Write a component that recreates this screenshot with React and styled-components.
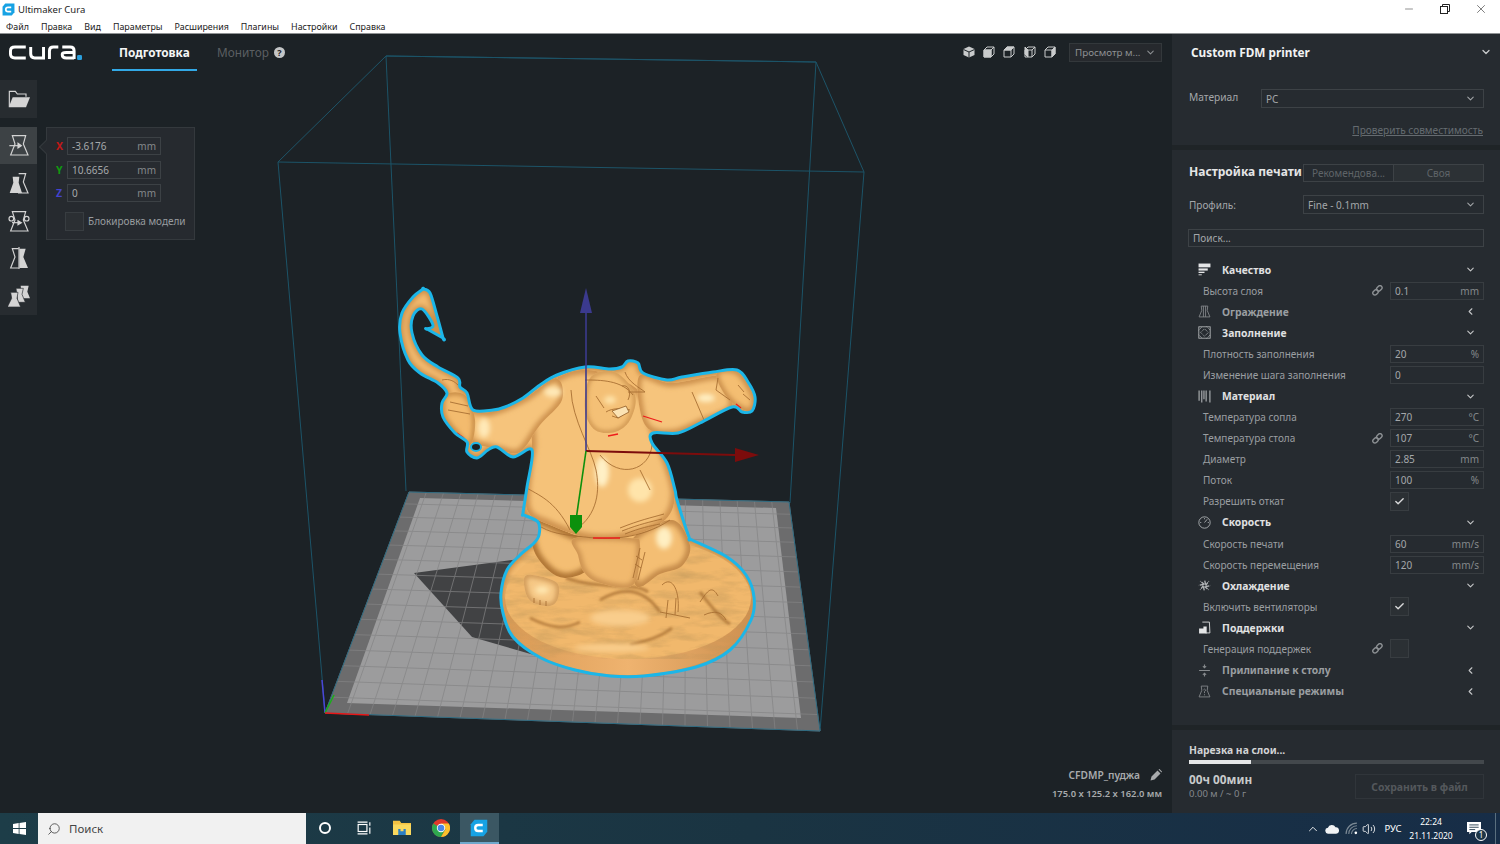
import React from 'react';
import styled, { createGlobalStyle } from 'styled-components';
import { Check, ChevronDown, ChevronLeft, ChevronUp, Minus, Search, Volume2, X } from 'lucide-react';

const GlobalStyle = createGlobalStyle`
  html, body { margin: 0; padding: 0; width: 1500px; height: 844px; overflow: hidden; background: #1c2226; }
  * { box-sizing: border-box; }
  body { font-family: "Noto Sans", "Open Sans", sans-serif; }
`;

const PLATE = { tl: [409, 492], tr: [789, 502], br: [820, 731], bl: [325, 713] };
const BED = { tl: [420, 498], tr: [776, 508], br: [801, 718], bl: [347, 703] };

const lerp = (a, b, t) => [a[0] + (b[0] - a[0]) * t, a[1] + (b[1] - a[1]) * t];
const toPoints = (q) => [q.tl, q.tr, q.br, q.bl].map((p) => p.join(',')).join(' ');

function gridLines(cols, rows) {
  const lines = [];
  for (let i = 0; i <= cols; i++) {
    const t = i / cols;
    lines.push([lerp(PLATE.tl, PLATE.tr, t), lerp(PLATE.bl, PLATE.br, t)]);
  }
  for (let j = 0; j <= rows; j++) {
    const t = Math.pow(j / rows, 1.08);
    lines.push([lerp(PLATE.tl, PLATE.bl, t), lerp(PLATE.tr, PLATE.br, t)]);
  }
  return lines;
}

// closed catmull-rom through the points, a repeated point gives a sharp corner
function smooth(pts) {
  const n = pts.length;
  let d = `M${pts[0][0]} ${pts[0][1]}`;
  for (let i = 0; i < n; i++) {
    const p0 = pts[(i - 1 + n) % n];
    const p1 = pts[i];
    const p2 = pts[(i + 1) % n];
    const p3 = pts[(i + 2) % n];
    const c1 = [p1[0] + (p2[0] - p0[0]) / 6, p1[1] + (p2[1] - p0[1]) / 6];
    const c2 = [p2[0] - (p3[0] - p1[0]) / 6, p2[1] - (p3[1] - p1[1]) / 6];
    d += ` C${c1[0].toFixed(1)} ${c1[1].toFixed(1)} ${c2[0].toFixed(1)} ${c2[1].toFixed(1)} ${p2[0]} ${p2[1]}`;
  }
  return d + ' Z';
}

const SILHOUETTE = smooth([
  [423, 289], [423, 289], [430, 293], [437, 316], [443, 338], [443, 338], [427, 329], [427, 329], [433, 325],
  [422, 309], [413, 316], [412, 333], [422, 355], [438, 367], [458, 378], [460, 387], [467, 393], [473, 410],
  [493, 410], [505, 407], [523, 398], [540, 385], [557, 375], [585, 367], [610, 369], [622, 367], [628, 361],
  [638, 363], [643, 373], [667, 380], [682, 377], [713, 372], [737, 370], [748, 382], [755, 397], [752, 411],
  [742, 412], [732, 407], [700, 423], [678, 433], [653, 433], [652, 443], [667, 463], [675, 490], [677, 500],
  [689, 537], [692, 540], [727, 557], [746, 575], [754, 597], [751, 620], [730, 650], [696, 667], [644, 676],
  [610, 676], [575, 670], [541, 658], [513, 637], [503, 613], [501, 593], [507, 570], [520, 555], [534, 543],
  [539, 535], [538, 522], [524, 515], [523, 513], [527, 487], [532, 450], [513, 457], [497, 447], [488, 450],
  [477, 458], [467, 452], [467, 442], [455, 433], [443, 417], [442, 403], [447, 393], [438, 383], [420, 373],
  [408, 360], [400, 333], [402, 313], [413, 297],
]);

const PARTS = [
  { id: 'knee', shade: '#c48a48', width: 9, pts: [[632, 540], [672, 520], [690, 545], [682, 566], [660, 574], [636, 586]] },
  { id: 'leg', shade: '#b07635', width: 10, pts: [[535, 520], [575, 535], [600, 540], [590, 560], [585, 572], [565, 578], [548, 570], [533, 548]] },
  { id: 'cloth', fill: '#f1b96e', shade: '#cb914f', width: 7, pts: [[575, 538], [630, 538], [640, 545], [633, 585], [600, 583], [584, 572], [578, 555]] },
  { id: 'foot', fill: '#f6c886', shade: '#c99150', width: 5, pts: [[527, 575], [556, 582], [558, 598], [550, 606], [532, 602], [525, 590]] },
  { id: 'torso', fill: '#f5c279', shade: '#cf9350', width: 9, pts: [[540, 390], [570, 372], [600, 372], [640, 392], [655, 433], [668, 465], [675, 495], [665, 520], [630, 536], [590, 538], [550, 525], [527, 510], [528, 470], [532, 445], [530, 410]] },
  { id: 'arm-r', fill: '#f6c47c', shade: '#cd914e', width: 8, pts: [[640, 375], [670, 383], [712, 376], [722, 378], [732, 407], [700, 423], [675, 433], [650, 430], [640, 410]] },
  { id: 'fist', fill: '#f4be72', shade: '#c88c49', width: 6, pts: [[717, 372], [738, 372], [754, 397], [750, 411], [735, 405], [722, 390]] },
  { id: 'arm-l', fill: '#f6c47c', shade: '#cd914e', width: 8, pts: [[468, 412], [490, 412], [525, 398], [556, 378], [562, 400], [540, 425], [520, 452], [500, 450], [487, 447], [470, 440]] },
  { id: 'hand', fill: '#f3bb6e', shade: '#c0843f', width: 5, pts: [[445, 395], [465, 395], [475, 420], [470, 445], [455, 432], [443, 415]] },
  { id: 'head', fill: '#f4c076', shade: '#c48a46', width: 4, pts: [[590, 378], [615, 372], [635, 395], [630, 420], [615, 432], [595, 430], [585, 410]] },
];

const HIGHLIGHTS = [
  [484, 428, 6, 10, '#ffe9b8'],
  [553, 392, 9, 5, '#ffe9b8'],
  [706, 398, 9, 4, '#fff0c4'],
  [602, 472, 7, 15, '#fff0c6'],
  [640, 490, 12, 12, '#ffe4aa'],
  [610, 400, 6, 4, '#ffe4aa'],
  [664, 538, 8, 11, '#ffefc2'],
  [542, 590, 7, 4, '#ffe7b0'],
  [612, 648, 38, 4, '#f9cd8c'],
  [620, 618, 30, 8, '#f9cd8c'],
];

const TERRAIN_STREAKS = [
  'M600 600 C625 585 645 590 660 612',
  'M530 618 C550 628 565 630 580 622',
  'M630 645 C650 640 662 636 672 628',
  'M700 592 C712 608 722 620 730 624',
  'M566 578 C600 590 635 582 648 592',
];

const DETAIL_LINES = [
  'M571 390 C572 420 592 450 596 470 C600 490 598 515 575 530',
  'M585 380 C600 380 622 380 633 395',
  'M525 487 C538 495 555 500 570 530',
  'M625 372 C628 382 640 388 645 392 L628 392',
  'M692 392 L704 420',
  'M718 378 L716 390 L730 400 M738 385 L744 392 M743 394 L750 400',
  'M640 470 L650 490 M600 455 C620 480 650 470 652 445',
  'M541 527 C555 535 570 535 585 537 C605 540 640 540 670 520',
  'M534 598 L534 603 M540 600 L540 605 M546 601 L546 606',
  'M640 548 L633 578 M645 552 L638 580 M636 556 L642 560 M635 564 L641 568',
  'M662 585 C672 575 680 590 678 612 M668 600 L666 618 M676 598 L675 615 M660 612 L690 618',
  'M700 602 C708 590 712 585 718 596 M704 615 C715 610 722 612 726 620',
  'M620 528 C640 520 650 518 664 514 M622 531 C640 524 650 522 662 519 M625 534 C640 528 650 526 660 524',
  'M450 402 L468 406 M448 410 L470 414',
  'M442 380 C450 378 455 382 458 385',
  'M606 412 C612 408 622 408 630 410 M612 416 L618 418 L624 414',
  'M596 396 L604 408 M622 386 C628 384 632 392 628 400',
];

const RED_MARKS = [
  'M643 416 L662 422',
  'M608 436 L618 434',
  'M457 433 L464 438',
  'M593 538 L620 538',
  'M736 404 L741 408',
];

function Part({ id, pts, fill = '#f4be73', shade, width }) {
  const d = smooth(pts);
  return (
    <g>
      <clipPath id={id}>
        <path d={d} />
      </clipPath>
      <path d={d} fill={fill} />
      <g clipPath={`url(#${id})`}>
        <path d={d} fill="none" stroke={shade} strokeWidth={width} filter="url(#soft)" />
      </g>
    </g>
  );
}

function Scene() {
  return (
    <SceneSvg viewBox="0 34 1172 779">
      <defs>
        <clipPath id="body-clip">
          <path d={SILHOUETTE} />
        </clipPath>
        <filter id="soft" x="-50%" y="-50%" width="200%" height="200%">
          <feGaussianBlur stdDeviation="2.4" />
        </filter>
        <filter id="softer" x="-50%" y="-50%" width="200%" height="200%">
          <feGaussianBlur stdDeviation="1.2" />
        </filter>
        <filter id="terrain" x="0" y="0" width="100%" height="100%">
          <feTurbulence type="fractalNoise" baseFrequency="0.03 0.11" numOctaves="4" seed="7" />
          <feColorMatrix values="0 0 0 0 0.5  0 0 0 0 0.3  0 0 0 0 0.1  1.9 0 0 0 -0.8" />
        </filter>
        <linearGradient id="rim-fill" x1="0" y1="0" x2="1" y2="0">
          <stop offset="0" stopColor="#d99a55" />
          <stop offset="0.5" stopColor="#efb36f" />
          <stop offset="1" stopColor="#cd9050" />
        </linearGradient>
      </defs>

      <g fill="none" stroke="#1c5468" strokeWidth="1">
        <polyline points="406,491 386,56 816,62 790,503" />
        <polygon points="278,162 864,172 816,62 386,56" />
        <polyline points="278,162 325,712" />
        <polyline points="864,172 820,731" />
      </g>

      <polygon points={toPoints(PLATE)} fill="#6c6c6d" />
      <polygon points={toPoints(BED)} fill="#9c9c9d" />
      <polygon points="414,573 520,559 560,600 600,668 541,657 472,637" fill="#414244" />
      <g stroke="#848485" strokeWidth="1" opacity="0.7">
        {gridLines(22, 15).map(([a, b], i) => (
          <line key={i} x1={a[0]} y1={a[1]} x2={b[0]} y2={b[1]} />
        ))}
      </g>
      <polygon points={toPoints(PLATE)} fill="none" stroke="#2d6a80" strokeWidth="1" />

      <path d={SILHOUETTE} fill="#f3bb70" />
      <g clipPath="url(#body-clip)">
        <path d={SILHOUETTE} fill="none" stroke="#c98e4a" strokeWidth="7" filter="url(#soft)" />
        <ellipse cx="628" cy="608" rx="125" ry="67" fill="url(#rim-fill)" />
        <ellipse cx="628" cy="598" rx="123" ry="61" fill="#f1b86c" />
        <ellipse cx="628" cy="598" rx="123" ry="61" filter="url(#terrain)" opacity="0.6" />
        <g fill="none" stroke="#a56d30" strokeWidth="3" filter="url(#softer)" opacity="0.7">
          {TERRAIN_STREAKS.map((d) => (
            <path key={d} d={d} />
          ))}
        </g>
        {PARTS.map((part) => (
          <Part key={part.id} {...part} />
        ))}
        <g filter="url(#soft)">
          {HIGHLIGHTS.map(([cx, cy, rx, ry, fill], i) => (
            <ellipse key={i} cx={cx} cy={cy} rx={rx} ry={ry} fill={fill} />
          ))}
        </g>
        <g fill="none" stroke="#a86f33" strokeWidth="0.9">
          {DETAIL_LINES.map((d) => (
            <path key={d} d={d} />
          ))}
        </g>
        <path d="M612 411 L626 406 L629 412 L618 418 Z" fill="#fbe3b4" stroke="#8f5a26" strokeWidth="0.8" />
        <g fill="none" stroke="#ee1c1c" strokeWidth="1.3">
          {RED_MARKS.map((d) => (
            <path key={d} d={d} />
          ))}
        </g>
      </g>
      <path d={SILHOUETTE} fill="none" stroke="#1cb6e8" strokeWidth="3" strokeLinejoin="round" />
      <ellipse cx="476" cy="447" rx="5" ry="4" fill="#1c2226" stroke="#1cb6e8" strokeWidth="2" />

      <g strokeWidth="1.6" fill="none">
        <path d="M586 451 V310" stroke="#3b3a8e" />
        <path d="M586 451 L735 455" stroke="#7c0c0c" strokeWidth="2" />
        <path d="M586 451 L576 520" stroke="#0c900c" />
      </g>
      <polygon points="586,288 592,313 580,313" fill="#3b3a8e" />
      <polygon points="735,448 759,455 735,462" fill="#7c0c0c" />
      <polygon points="570,515 582,515 582,527 576,534 570,527" fill="#0c900c" />
      <g fill="none" strokeWidth="1.5">
        <path d="M325 713 L322 680" stroke="#4a46d8" />
        <path d="M325 713 L334 695" stroke="#18b018" />
        <path d="M325 713 L369 715" stroke="#ea1616" />
      </g>
    </SceneSvg>
  );
}

function CuraLogo() {
  return (
    <LogoSvg viewBox="0 0 74 16">
      <g fill="none" stroke="#fff" strokeWidth="3">
        <path d="M17 2 H6 Q1.5 2 1.5 6 V9 Q1.5 13 6 13 H17" />
        <path d="M22 2 V9 Q22 13 26 13 H35 V2" />
        <path d="M41 14 V6 Q41 2 45 2 H50" />
        <path d="M54 2 H62 Q66 2 66 6 V14 M66 13 H58 Q54 13 54 10 V9 Q54 7.5 58 7.5 H66" />
      </g>
      <rect x="69" y="10" width="5" height="5" rx="1.2" fill="#2a9fdc" />
    </LogoSvg>
  );
}

function CuraMark({ size }) {
  return (
    <svg width={size} height={size} viewBox="0 0 24 24">
      <path d="M6 1 H23 V17 L18 23 H1 V7 Z" fill="#17a2e4" />
      <path d="M17 8 H11 Q7 8 7 12 Q7 16 11 16 H17" fill="none" stroke="#fff" strokeWidth="3.2" />
    </svg>
  );
}

const TRAPEZE = 'M13 5 H53 L46 30 L60 63 H8 L21 30 Z';

function ToolGlyph({ kind }) {
  return (
    <svg width="22" height="22" viewBox="0 0 66 66" fill="none" stroke="#d4d4d4" strokeWidth="3.5">
      {kind === 'move' && (
        <>
          <path d={TRAPEZE} />
          <path d="M4 35 H36" />
          <path d="M30 28 L40 35 L30 42 Z" fill="#d4d4d4" />
        </>
      )}
      {kind === 'scale' && (
        <>
          <path d="M32 5 H53 L46 30 L60 63 H30" />
          <path d="M14 14 H34 L32 32 L42 63 H5 L16 32 Z" fill="#d4d4d4" stroke="none" />
        </>
      )}
      {kind === 'rotate' && (
        <>
          <path d={TRAPEZE} />
          <circle cx="10" cy="26" r="7" />
          <circle cx="56" cy="26" r="7" />
          <path d="M12 38 H36" />
          <path d="M30 32 L40 38 L30 44 Z" fill="#d4d4d4" />
        </>
      )}
      {kind === 'mirror' && (
        <>
          <path d="M32 5 H13 L21 30 L8 63 H32" />
          <path d="M34 5 H53 L46 30 L60 63 H34 Z" fill="#d4d4d4" stroke="none" />
          <path d="M33 0 V66" />
        </>
      )}
      {kind === 'per-model' && (
        <>
          <path d="M38 2 H62 L58 20 L66 40 H44 L40 20 Z" fill="#d4d4d4" stroke="none" />
          <path d="M24 10 H46 L42 28 L52 52 H30 Z" fill="#d4d4d4" stroke="#272c30" strokeWidth="2" />
          <path d="M8 22 H30 L27 40 L38 66 H-2 L11 40 Z" fill="#d4d4d4" stroke="#272c30" strokeWidth="2" />
        </>
      )}
      {kind === 'folder' && (
        <>
          <path d="M4 56 V10 H22 L28 18 H54 V26" />
          <path d="M14 28 H66 L54 58 H2 Z" fill="#d4d4d4" stroke="none" />
        </>
      )}
    </svg>
  );
}

function CubeGlyph({ face }) {
  return (
    <svg width="12" height="12" viewBox="0 0 24 24" fill="none" stroke="#c9cbcc" strokeWidth="2">
      {face === 'iso' ? (
        <>
          <path d="M12 1 L23 6 V18 L12 23 L1 18 V6 Z" fill="#c9cbcc" stroke="none" />
          <path d="M1 7 L12 12 L23 7 M12 12 V23" stroke="#1c2226" />
        </>
      ) : (
        <>
          <path d="M8 2 H22 V16 L16 22 H2 V8 Z" />
          <path d="M2 8 H16 V22 M16 8 L22 2" />
          {face === 'front' && <path d="M2 8 H16 V22 H2 Z" fill="#c9cbcc" />}
          {face === 'top' && <path d="M8 2 H22 L16 8 H2 Z" fill="#c9cbcc" />}
          {face === 'left' && <path d="M2 2 L8 8 V22 L2 16 Z" fill="#c9cbcc" />}
          {face === 'right' && <path d="M16 8 L22 2 V16 L16 22 Z" fill="#c9cbcc" />}
        </>
      )}
    </svg>
  );
}

function SectionGlyph({ kind, color }) {
  return (
    <svg width="13" height="13" viewBox="0 0 24 24" fill="none" stroke={color} strokeWidth="1.6">
      {kind === 'quality' && (
        <g fill={color} stroke="none">
          <rect x="1" y="1" width="22" height="7" />
          <rect x="1" y="10" width="17" height="4" />
          <rect x="1" y="16" width="11" height="2.5" />
          <rect x="1" y="21" width="6" height="1.6" />
        </g>
      )}
      {kind === 'shell' && <path d="M6 2 H18 L17 10 L22 22 H2 L7 10 Z M10 2 L10 22 M14 2 L14 22" />}
      {kind === 'infill' && (
        <>
          <rect x="1.5" y="1.5" width="21" height="21" />
          <path d="M1 8 L8 1 M16 1 L23 8 M1 16 L8 23 M16 23 L23 16 M5 12 L12 5 L19 12 L12 19 Z" strokeDasharray="2 1.5" />
        </>
      )}
      {kind === 'material' && (
        <g strokeWidth="2">
          <path d="M2 1 V20 M7 1 V23 M11 1 V17 M15 1 V21 M22 1 V23" />
        </g>
      )}
      {kind === 'speed' && (
        <>
          <circle cx="12" cy="12" r="10.5" />
          <path d="M12 12 L17 6 M4 12 H6 M18 12 H20 M12 4 V6" />
        </>
      )}
      {kind === 'cooling' && (
        <g strokeWidth="2.4" strokeDasharray="7 2">
          <path d="M14 10 L12 1 M14 12 L20 4 M14 14 L23 12 M12 14 L20 20 M10 14 L12 23 M10 12 L4 20 M10 10 L1 12 M12 10 L4 4" />
        </g>
      )}
      {kind === 'support' && (
        <>
          <path d="M8 2 H21 L22 22 H14" />
          <path d="M10 10 V14 H2 V23 H16 V10 Z" fill={color} stroke="none" />
        </>
      )}
      {kind === 'adhesion' && (
        <g strokeWidth="2">
          <path d="M2 12 H22 M12 1 V6 M12 18 V23 M9 4 L12 7 L15 4 M9 20 L12 17 L15 20" />
        </g>
      )}
      {kind === 'special' && (
        <>
          <path d="M6 2 H18 L17 10 L22 22 H2 L7 10 Z" />
          <path d="M10 9 Q12 6 14 9 Q14 11 12 12 V15 M12 17 V19" />
        </>
      )}
    </svg>
  );
}

function LinkGlyph() {
  return (
    <svg width="11" height="11" viewBox="0 0 24 24" fill="none" stroke="#8d9194" strokeWidth="3">
      <rect x="1" y="12" width="13" height="9" rx="4.5" transform="rotate(-45 7 16)" />
      <rect x="10" y="3" width="13" height="9" rx="4.5" transform="rotate(-45 16 8)" />
    </svg>
  );
}

function PencilGlyph() {
  return (
    <svg width="12" height="12" viewBox="0 0 24 24" fill="#a8abad">
      <path d="M1 23 L3 15 L15 3 L21 9 L9 21 Z M17 1 L19 0 L24 5 L23 7 Z" />
    </svg>
  );
}

function WindowsLogo() {
  return (
    <svg width="13" height="13" viewBox="0 0 24 24" fill="#fff">
      <path d="M0 3.5 L10.5 2 V11.3 H0 Z M12 1.8 L24 0 V11.3 H12 Z M0 12.8 H10.5 V22 L0 20.5 Z M12 12.8 H24 V24 L12 22.2 Z" />
    </svg>
  );
}

function ExplorerIcon() {
  return (
    <svg width="18" height="15" viewBox="0 0 24 20">
      <path d="M0 1 H9 L11 4 H24 V20 H0 Z" fill="#f5c242" />
      <rect x="0" y="6" width="24" height="14" fill="#fbd95e" />
      <rect x="7" y="12" width="10" height="8" fill="#2c7fc4" />
      <rect x="10" y="12" width="4" height="3" fill="#fbd95e" />
    </svg>
  );
}

function ChromeIcon() {
  return (
    <svg width="18" height="18" viewBox="0 0 24 24">
      <circle cx="12" cy="12" r="12" fill="#e0392c" />
      <path d="M12 12 L1.6 6 A12 12 0 0 0 12 24 L18 13.5 Z" fill="#2fa84f" />
      <path d="M12 6 H22.4 A12 12 0 0 1 12 24 L18 13.5 Z" fill="#fbc02d" />
      <circle cx="12" cy="12" r="5.6" fill="#fff" />
      <circle cx="12" cy="12" r="4.4" fill="#4a86e8" />
    </svg>
  );
}

function TaskViewIcon() {
  return (
    <svg width="14" height="14" viewBox="0 0 24 24" fill="none" stroke="#fff" strokeWidth="2">
      <rect x="2" y="6" width="15" height="12" />
      <path d="M1 2 H18 M1 22 H18 M22 2 V8 M22 11 V22" />
    </svg>
  );
}

function CloudIcon() {
  return (
    <svg width="14" height="10" viewBox="0 0 24 16" fill="#f1f3f5">
      <path d="M6 16 A5 5 0 0 1 5 6 A7 7 0 0 1 18 5 A5.5 5.5 0 0 1 19 16 Z" />
    </svg>
  );
}

function WifiIcon() {
  return (
    <svg width="13" height="13" viewBox="0 0 24 24" fill="none" stroke="#7c8a95" strokeWidth="2">
      <path d="M2 22 A20 20 0 0 1 22 2 M7 22 A15 15 0 0 1 22 7 M12 22 A10 10 0 0 1 22 12" />
      <circle cx="20" cy="20" r="2.4" fill="#fff" stroke="none" />
    </svg>
  );
}

function NotifyIcon() {
  return (
    <svg width="14" height="14" viewBox="0 0 24 24" fill="#fff">
      <path d="M0 0 H24 V17 H8 L4 21 V17 H0 Z" />
      <path d="M4 5 H20 M4 9 H20 M4 13 H14" stroke="#1c3547" strokeWidth="1.5" />
    </svg>
  );
}

const MENU = ['Файл', 'Правка', 'Вид', 'Параметры', 'Расширения', 'Плагины', 'Настройки', 'Справка'];
const TOOLS = ['move', 'scale', 'rotate', 'mirror', 'per-model'];
const CUBES = ['iso', 'front', 'top', 'left', 'right'];
const COORDS = [
  { axis: 'X', color: '#c01818', value: '-3.6176' },
  { axis: 'Y', color: '#109a10', value: '10.6656' },
  { axis: 'Z', color: '#4343cf', value: '0' },
];

const SETTINGS = [
  { head: 'Качество', icon: 'quality', open: true, bright: true },
  { label: 'Высота слоя', value: '0.1', unit: 'mm', link: true },
  { head: 'Ограждение', icon: 'shell', dim: true },
  { head: 'Заполнение', icon: 'infill', open: true },
  { label: 'Плотность заполнения', value: '20', unit: '%' },
  { label: 'Изменение шага заполнения', value: '0' },
  { head: 'Материал', icon: 'material', open: true },
  { label: 'Температура сопла', value: '270', unit: '°C' },
  { label: 'Температура стола', value: '107', unit: '°C', link: true },
  { label: 'Диаметр', value: '2.85', unit: 'mm' },
  { label: 'Поток', value: '100', unit: '%' },
  { label: 'Разрешить откат', checked: true },
  { head: 'Скорость', icon: 'speed', open: true },
  { label: 'Скорость печати', value: '60', unit: 'mm/s' },
  { label: 'Скорость перемещения', value: '120', unit: 'mm/s' },
  { head: 'Охлаждение', icon: 'cooling', open: true },
  { label: 'Включить вентиляторы', checked: true },
  { head: 'Поддержки', icon: 'support', open: true, bright: true },
  { label: 'Генерация поддержек', unchecked: true, link: true },
  { head: 'Прилипание к столу', icon: 'adhesion', dim: true },
  { head: 'Специальные режимы', icon: 'special', dim: true },
];

function SettingRow({ row }) {
  if (row.head) {
    const color = row.bright ? '#e4e5e6' : row.dim ? '#85898c' : '#b4b7b9';
    return (
      <HeadRow>
        <HeadIcon>
          <SectionGlyph kind={row.icon} color={color} />
        </HeadIcon>
        <HeadText $dim={row.dim}>{row.head}</HeadText>
        <HeadChevron>
          {row.open ? <ChevronDown size={11} strokeWidth={2.4} /> : <ChevronLeft size={11} strokeWidth={2.4} />}
        </HeadChevron>
      </HeadRow>
    );
  }
  return (
    <FieldRow>
      <FieldLabel>{row.label}</FieldLabel>
      <LinkSlot>{row.link && <LinkGlyph />}</LinkSlot>
      {row.value !== undefined && (
        <FieldInput>
          <span>{row.value}</span>
          <Unit>{row.unit}</Unit>
        </FieldInput>
      )}
      {(row.checked || row.unchecked) && (
        <CheckBox>{row.checked && <Check size={11} strokeWidth={3} color="#d8d9da" />}</CheckBox>
      )}
    </FieldRow>
  );
}

export default function App() {
  return (
    <Page>
      <GlobalStyle />
      <TitleBar>
        <TitleLeft>
          <CuraMark size={13} />
          <TitleText>Ultimaker Cura</TitleText>
        </TitleLeft>
        <WindowButtons>
          <WindowButton>
            <Minus size={12} strokeWidth={1} />
          </WindowButton>
          <WindowButton>
            <svg width="10" height="10" viewBox="0 0 10 10" fill="none" stroke="#222" strokeWidth="1">
              <rect x="0.5" y="2.5" width="7" height="7" />
              <path d="M2.5 2.5 V0.5 H9.5 V7.5 H7.5" />
            </svg>
          </WindowButton>
          <WindowButton>
            <X size={14} strokeWidth={1} />
          </WindowButton>
        </WindowButtons>
      </TitleBar>
      <MenuBar>
        {MENU.map((item) => (
          <MenuItem key={item}>{item}</MenuItem>
        ))}
      </MenuBar>

      <Main>
        <Viewport>
          <Scene />
          <Header>
            <HeaderLeft>
              <CuraLogo />
              <StageTab $active>Подготовка</StageTab>
              <StageTab>
                Монитор
                <HelpDot>?</HelpDot>
              </StageTab>
            </HeaderLeft>
            <HeaderRight>
              <CubeRow>
                {CUBES.map((face) => (
                  <CubeGlyph key={face} face={face} />
                ))}
              </CubeRow>
              <ViewSelect>
                <span>Просмотр м...</span>
                <ChevronDown size={11} strokeWidth={2.2} />
              </ViewSelect>
            </HeaderRight>
          </Header>

          <ToolArea>
            <ToolColumn>
              <ToolBlock>
                <ToolButton>
                  <ToolGlyph kind="folder" />
                </ToolButton>
              </ToolBlock>
              <ToolBlock>
                {TOOLS.map((tool, i) => (
                  <ToolButton key={tool} $active={i === 0}>
                    <ToolGlyph kind={tool} />
                  </ToolButton>
                ))}
              </ToolBlock>
            </ToolColumn>
            <MovePanel>
              <PanelArrow />
              {COORDS.map((c) => (
                <CoordRow key={c.axis}>
                  <AxisLabel $color={c.color}>{c.axis}</AxisLabel>
                  <CoordInput>
                    <span>{c.value}</span>
                    <Unit>mm</Unit>
                  </CoordInput>
                </CoordRow>
              ))}
              <LockRow>
                <LockBox />
                <span>Блокировка модели</span>
              </LockRow>
            </MovePanel>
          </ToolArea>

          <ModelInfo>
            <ModelName>
              <span>CFDMP_пуджа</span>
              <PencilGlyph />
            </ModelName>
            <ModelSize>175.0 x 125.2 x 162.0 мм</ModelSize>
          </ModelInfo>
        </Viewport>

        <Sidebar>
          <PrinterCard>
            <PrinterHead>
              <span>Custom FDM printer</span>
              <ChevronDown size={12} strokeWidth={2.6} color="#c8cacb" />
            </PrinterHead>
            <MaterialRow>
              <MaterialLabel>Материал</MaterialLabel>
              <Select $width={223}>
                <span>PC</span>
                <ChevronDown size={11} strokeWidth={2.2} />
              </Select>
            </MaterialRow>
            <CheckLink>Проверить совместимость</CheckLink>
          </PrinterCard>

          <SetupCard>
            <SetupHead>
              <SetupTitle>Настройка печати</SetupTitle>
              <ModeTabs>
                <ModeTab>Рекомендова...</ModeTab>
                <ModeTab $active>Своя</ModeTab>
              </ModeTabs>
            </SetupHead>
            <ProfileRow>
              <ProfileLabel>Профиль:</ProfileLabel>
              <Select $width={181}>
                <span>Fine - 0.1mm</span>
                <ChevronDown size={11} strokeWidth={2.2} />
              </Select>
            </ProfileRow>
            <SearchBox>Поиск...</SearchBox>
            <SettingsList>
              {SETTINGS.map((row) => (
                <SettingRow key={row.head || row.label} row={row} />
              ))}
            </SettingsList>
          </SetupCard>

          <SliceCard>
            <SliceTitle>Нарезка на слои...</SliceTitle>
            <Progress>
              <ProgressFill $percent={21} />
            </Progress>
            <SliceBottom>
              <div>
                <TimeText>00ч 00мин</TimeText>
                <CostText>0.00 м / ~ 0 г</CostText>
              </div>
              <SaveButton>Сохранить в файл</SaveButton>
            </SliceBottom>
          </SliceCard>
        </Sidebar>
      </Main>

      <Taskbar>
        <StartButton>
          <WindowsLogo />
        </StartButton>
        <TaskSearch>
          <MirrorIcon>
            <Search size={14} strokeWidth={1.3} color="#333" />
          </MirrorIcon>
          <span>Поиск</span>
        </TaskSearch>
        <TaskButton>
          <CortanaRing />
        </TaskButton>
        <TaskButton>
          <TaskViewIcon />
        </TaskButton>
        <TaskButton>
          <ExplorerIcon />
        </TaskButton>
        <TaskButton>
          <ChromeIcon />
        </TaskButton>
        <TaskButton $active>
          <CuraMark size={18} />
        </TaskButton>
        <Tray>
          <TraySlot $width={20}>
            <ChevronUp size={14} strokeWidth={1.5} color="#fff" />
          </TraySlot>
          <TraySlot $width={18}>
            <CloudIcon />
          </TraySlot>
          <TraySlot $width={20}>
            <WifiIcon />
          </TraySlot>
          <TraySlot $width={16}>
            <Volume2 size={14} strokeWidth={1.4} color="#fff" />
          </TraySlot>
          <TraySlot $width={32}>РУС</TraySlot>
          <TraySlot $width={44}>
            <Clock>
              <span>22:24</span>
              <span>21.11.2020</span>
            </Clock>
          </TraySlot>
          <TraySlot $width={42}>
            <NotifyWrap>
              <NotifyIcon />
              <NotifyBadge>1</NotifyBadge>
            </NotifyWrap>
          </TraySlot>
          <ShowDesktop />
        </Tray>
      </Taskbar>
    </Page>
  );
}

const Page = styled.div`
  width: 1500px;
  height: 844px;
  display: flex;
  flex-direction: column;
  overflow: hidden;
`;

const TitleBar = styled.div`
  height: 18px;
  background: #fff;
  display: flex;
  justify-content: space-between;
  align-items: center;
`;

const TitleLeft = styled.div`
  display: flex;
  align-items: center;
  gap: 3px;
  padding-left: 2px;
`;

const TitleText = styled.span`
  font-size: 9.5px;
  color: #222;
`;

const WindowButtons = styled.div`
  display: flex;
  padding-right: 1px;
`;

const WindowButton = styled.div`
  width: 36px;
  height: 18px;
  display: flex;
  align-items: center;
  justify-content: center;
  color: #222;
`;

const MenuBar = styled.div`
  height: 16px;
  background: #fff;
  border-bottom: 1px solid #8f9294;
  display: flex;
  align-items: center;
  gap: 12px;
  padding-left: 6px;
`;

const MenuItem = styled.span`
  font-size: 8.9px;
  color: #222;
  padding-top: 1px;
`;

const Main = styled.div`
  flex: 1;
  display: flex;
  min-height: 0;
`;

const Viewport = styled.div`
  position: relative;
  flex: 1;
  display: flex;
  flex-direction: column;
  background: #1c2226;
`;

const SceneSvg = styled.svg`
  position: absolute;
  inset: 0;
  width: 100%;
  height: 100%;
`;

const Header = styled.div`
  position: relative;
  height: 37px;
  display: flex;
  justify-content: space-between;
  padding: 0 10px 0 9px;
`;

const HeaderLeft = styled.div`
  display: flex;
  align-items: stretch;
`;

const LogoSvg = styled.svg`
  width: 73px;
  height: 16px;
  margin: 11px 30px 0 0;
`;

const StageTab = styled.div`
  height: 37px;
  width: 85px;
  padding: 1px 0 0 ${(p) => (p.$active ? 7 : 8)}px;
  margin-right: 12px;
  display: flex;
  align-items: center;
  gap: 5px;
  white-space: nowrap;
  font-size: 11.8px;
  font-weight: ${(p) => (p.$active ? 700 : 400)};
  color: ${(p) => (p.$active ? '#f4f5f5' : '#5b5f62')};
  border-bottom: 2px solid ${(p) => (p.$active ? '#32a9e6' : 'transparent')};
`;

const HelpDot = styled.span`
  width: 11px;
  height: 11px;
  border-radius: 50%;
  background: #c4c6c7;
  color: #1c2226;
  font-size: 9px;
  font-weight: 700;
  display: flex;
  align-items: center;
  justify-content: center;
`;

const HeaderRight = styled.div`
  display: flex;
  align-items: center;
  gap: 13px;
  padding-bottom: 1px;
`;

const CubeRow = styled.div`
  display: flex;
  gap: 8.3px;
  align-items: center;
`;

const ViewSelect = styled.div`
  width: 93px;
  height: 19px;
  background: #26292d;
  border: 1px solid #33383b;
  color: #8e9194;
  display: flex;
  justify-content: space-between;
  align-items: center;
  padding: 0 5px;
  font-size: 9.8px;
  white-space: nowrap;
`;

const ToolArea = styled.div`
  position: relative;
  display: flex;
  align-items: flex-start;
  margin-top: 9px;
`;

const ToolColumn = styled.div`
  display: flex;
  flex-direction: column;
  gap: 9px;
  width: 37px;
`;

const ToolBlock = styled.div`
  background: #272c30;
`;

const ToolButton = styled.div`
  height: 37.6px;
  display: flex;
  align-items: center;
  justify-content: center;
  background: ${(p) => (p.$active ? '#3d4245' : 'transparent')};
`;

const MovePanel = styled.div`
  position: relative;
  width: 149px;
  height: 113px;
  margin: 47px 0 0 9px;
  padding: 9px 0 0 7px;
  background: #262a2f;
  border: 1px solid #34393d;
  display: flex;
  flex-direction: column;
  gap: 5.5px;
`;

const PanelArrow = styled.div`
  position: absolute;
  left: -6px;
  top: 14px;
  width: 10px;
  height: 10px;
  background: #262a2f;
  border-left: 1px solid #34393d;
  border-bottom: 1px solid #34393d;
  transform: rotate(45deg);
`;

const CoordRow = styled.div`
  display: flex;
  align-items: center;
  gap: 4px;
`;

const AxisLabel = styled.span`
  width: 9px;
  padding-left: 2px;
  font-size: 10.5px;
  font-weight: 700;
  color: ${(p) => p.$color};
`;

const CoordInput = styled.div`
  width: 94px;
  height: 18px;
  border: 1px solid #3c4145;
  background: #272b30;
  display: flex;
  justify-content: space-between;
  align-items: center;
  padding: 0 4px;
  font-size: 10px;
  color: #a6a9ab;
`;

const Unit = styled.span`
  color: #84888b;
`;

const LockRow = styled.div`
  display: flex;
  align-items: center;
  gap: 4px;
  margin: 4px 0 0 11px;
  font-size: 10px;
  color: #989c9f;
  white-space: nowrap;
`;

const LockBox = styled.div`
  width: 19px;
  height: 19px;
  background: #2b2f33;
  border: 1px solid #383d41;
`;

const ModelInfo = styled.div`
  position: relative;
  margin-top: auto;
  padding: 0 10px 13px 0;
  display: flex;
  flex-direction: column;
  align-items: flex-end;
  gap: 5px;
  font-weight: 600;
  color: #a8abad;
`;

const ModelName = styled.div`
  display: flex;
  align-items: center;
  gap: 10px;
  font-size: 10.2px;
`;

const ModelSize = styled.div`
  font-size: 9.4px;
`;

const Sidebar = styled.div`
  width: 328px;
  display: flex;
  flex-direction: column;
  gap: 5px;
  background: #1f2427;
`;

const PrinterCard = styled.div`
  height: 111px;
  background: #262b30;
  padding: 0 16px 0 17px;
`;

const PrinterHead = styled.div`
  height: 36px;
  display: flex;
  justify-content: space-between;
  align-items: center;
  padding-left: 2px;
  margin-right: -8px;
  font-size: 11.8px;
  font-weight: 700;
  color: #f2f3f3;
`;

const MaterialRow = styled.div`
  display: flex;
  justify-content: space-between;
  align-items: center;
  margin-top: 19px;
`;

const MaterialLabel = styled.span`
  font-size: 10.2px;
  color: #a4a7aa;
  margin-top: -3px;
`;

const Select = styled.div`
  width: ${(p) => p.$width}px;
  height: 19px;
  border: 1px solid #3d4246;
  display: flex;
  justify-content: space-between;
  align-items: center;
  padding: 0 7px 0 4px;
  font-size: 10px;
  color: #a4a7aa;
`;

const CheckLink = styled.div`
  margin-top: 15px;
  margin-right: 1px;
  text-align: right;
  font-size: 10.1px;
  color: #656b70;
  text-decoration: underline;
`;

const SetupCard = styled.div`
  flex: 1;
  background: #262b30;
  padding: 13px 16px 0 16px;
`;

const SetupHead = styled.div`
  display: flex;
  justify-content: space-between;
  align-items: center;
`;

const SetupTitle = styled.span`
  font-size: 12px;
  font-weight: 700;
  color: #e4e5e6;
  padding-left: 1px;
  margin-bottom: 3px;
  white-space: nowrap;
`;

const ModeTabs = styled.div`
  display: flex;
  width: 181px;
  height: 18px;
  border: 1px solid #3d4246;
`;

const ModeTab = styled.div`
  flex: 1;
  display: flex;
  align-items: center;
  justify-content: center;
  font-size: 10px;
  color: #5f6468;
  white-space: nowrap;
  background: ${(p) => (p.$active ? '#2c3135' : 'transparent')};
  & + & {
    border-left: 1px solid #3d4246;
  }
`;

const ProfileRow = styled.div`
  display: flex;
  justify-content: space-between;
  align-items: center;
  margin-top: 12px;
`;

const ProfileLabel = styled.span`
  font-size: 10px;
  color: #a4a7aa;
  padding-left: 1px;
`;

const SearchBox = styled.div`
  height: 18px;
  margin-top: 15px;
  border: 1px solid #3d4246;
  display: flex;
  align-items: center;
  padding-left: 4px;
  font-size: 10px;
  color: #a4a7aa;
`;

const SettingsList = styled.div`
  margin-top: 12px;
  display: grid;
  grid-auto-rows: 21.08px;
`;

const HeadRow = styled.div`
  display: flex;
  align-items: center;
`;

const HeadIcon = styled.div`
  width: 34px;
  padding-left: 10px;
  display: flex;
  align-items: center;
`;

const HeadText = styled.span`
  flex: 1;
  font-size: 10.35px;
  font-weight: 700;
  color: ${(p) => (p.$dim ? '#9a9ea1' : '#e0e1e2')};
`;

const HeadChevron = styled.div`
  width: 19px;
  display: flex;
  color: #c4c6c7;
`;

const FieldRow = styled.div`
  display: flex;
  align-items: center;
  padding-left: 15px;
`;

const FieldLabel = styled.span`
  flex: 1;
  font-size: 10px;
  color: #9a9ea1;
  white-space: nowrap;
`;

const LinkSlot = styled.div`
  width: 20px;
  display: flex;
  padding-left: 2px;
`;

const FieldInput = styled.div`
  width: 94px;
  height: 18px;
  border: 1px solid #383d41;
  display: flex;
  justify-content: space-between;
  align-items: center;
  padding: 0 4px;
  font-size: 10px;
  color: #a4a7aa;
`;

const CheckBox = styled.div`
  width: 19px;
  height: 19px;
  margin-right: 75px;
  border: 1px solid #383d41;
  background: #2b3034;
  display: flex;
  align-items: center;
  justify-content: center;
`;

const SliceCard = styled.div`
  height: 83px;
  background: #262b30;
  padding: 13px 16px 0 17px;
`;

const SliceTitle = styled.div`
  font-size: 10.3px;
  font-weight: 700;
  color: #d2d4d5;
`;

const Progress = styled.div`
  height: 4px;
  margin-top: 3px;
  background: #43484c;
`;

const ProgressFill = styled.div`
  height: 100%;
  width: ${(p) => p.$percent}%;
  background: #e6e7e8;
`;

const SliceBottom = styled.div`
  display: flex;
  justify-content: space-between;
  align-items: flex-start;
  margin-top: 8px;
`;

const TimeText = styled.div`
  font-size: 11.8px;
  font-weight: 700;
  line-height: 15px;
  color: #c8cacb;
`;

const CostText = styled.div`
  font-size: 9.5px;
  line-height: 13px;
  color: #85898d;
`;

const SaveButton = styled.div`
  width: 129px;
  height: 25px;
  margin-top: 2px;
  border: 1px solid #30353a;
  display: flex;
  align-items: center;
  justify-content: center;
  font-size: 10.4px;
  font-weight: 700;
  color: #54585c;
`;

const Taskbar = styled.div`
  height: 31px;
  background: linear-gradient(90deg, #1d3d48 0%, #1a3442 50%, #172d47 100%);
  display: flex;
  align-items: stretch;
`;

const StartButton = styled.div`
  width: 38px;
  display: flex;
  align-items: center;
  justify-content: center;
`;

const TaskSearch = styled.div`
  width: 268px;
  background: #f1f1f1;
  display: flex;
  align-items: center;
  gap: 8px;
  padding-left: 9px;
  font-size: 11.5px;
  color: #444;
`;

const MirrorIcon = styled.div`
  display: flex;
  transform: scaleX(-1);
`;

const TaskButton = styled.div`
  width: 38.5px;
  display: flex;
  align-items: center;
  justify-content: center;
  background: ${(p) => (p.$active ? '#3b5763' : 'transparent')};
  border-bottom: 2px solid ${(p) => (p.$active ? '#6fa8cc' : 'transparent')};
`;

const CortanaRing = styled.div`
  width: 12px;
  height: 12px;
  border: 2px solid #fff;
  border-radius: 50%;
`;

const Tray = styled.div`
  margin-left: auto;
  display: flex;
  align-items: center;
  color: #fff;
`;

const TraySlot = styled.div`
  width: ${(p) => p.$width}px;
  display: flex;
  align-items: center;
  justify-content: center;
  font-size: 9.5px;
`;

const Clock = styled.div`
  display: flex;
  flex-direction: column;
  align-items: center;
  font-size: 8.5px;
  line-height: 14px;
  white-space: nowrap;
`;

const NotifyWrap = styled.div`
  position: relative;
  display: flex;
`;

const NotifyBadge = styled.span`
  position: absolute;
  right: -6px;
  bottom: -5px;
  width: 12px;
  height: 12px;
  border-radius: 50%;
  border: 1px solid #fff;
  background: #1c3547;
  font-size: 8px;
  line-height: 10px;
  text-align: center;
`;

const ShowDesktop = styled.div`
  width: 1px;
  height: 31px;
  margin-right: 4px;
  background: #5a6f7e;
`;
